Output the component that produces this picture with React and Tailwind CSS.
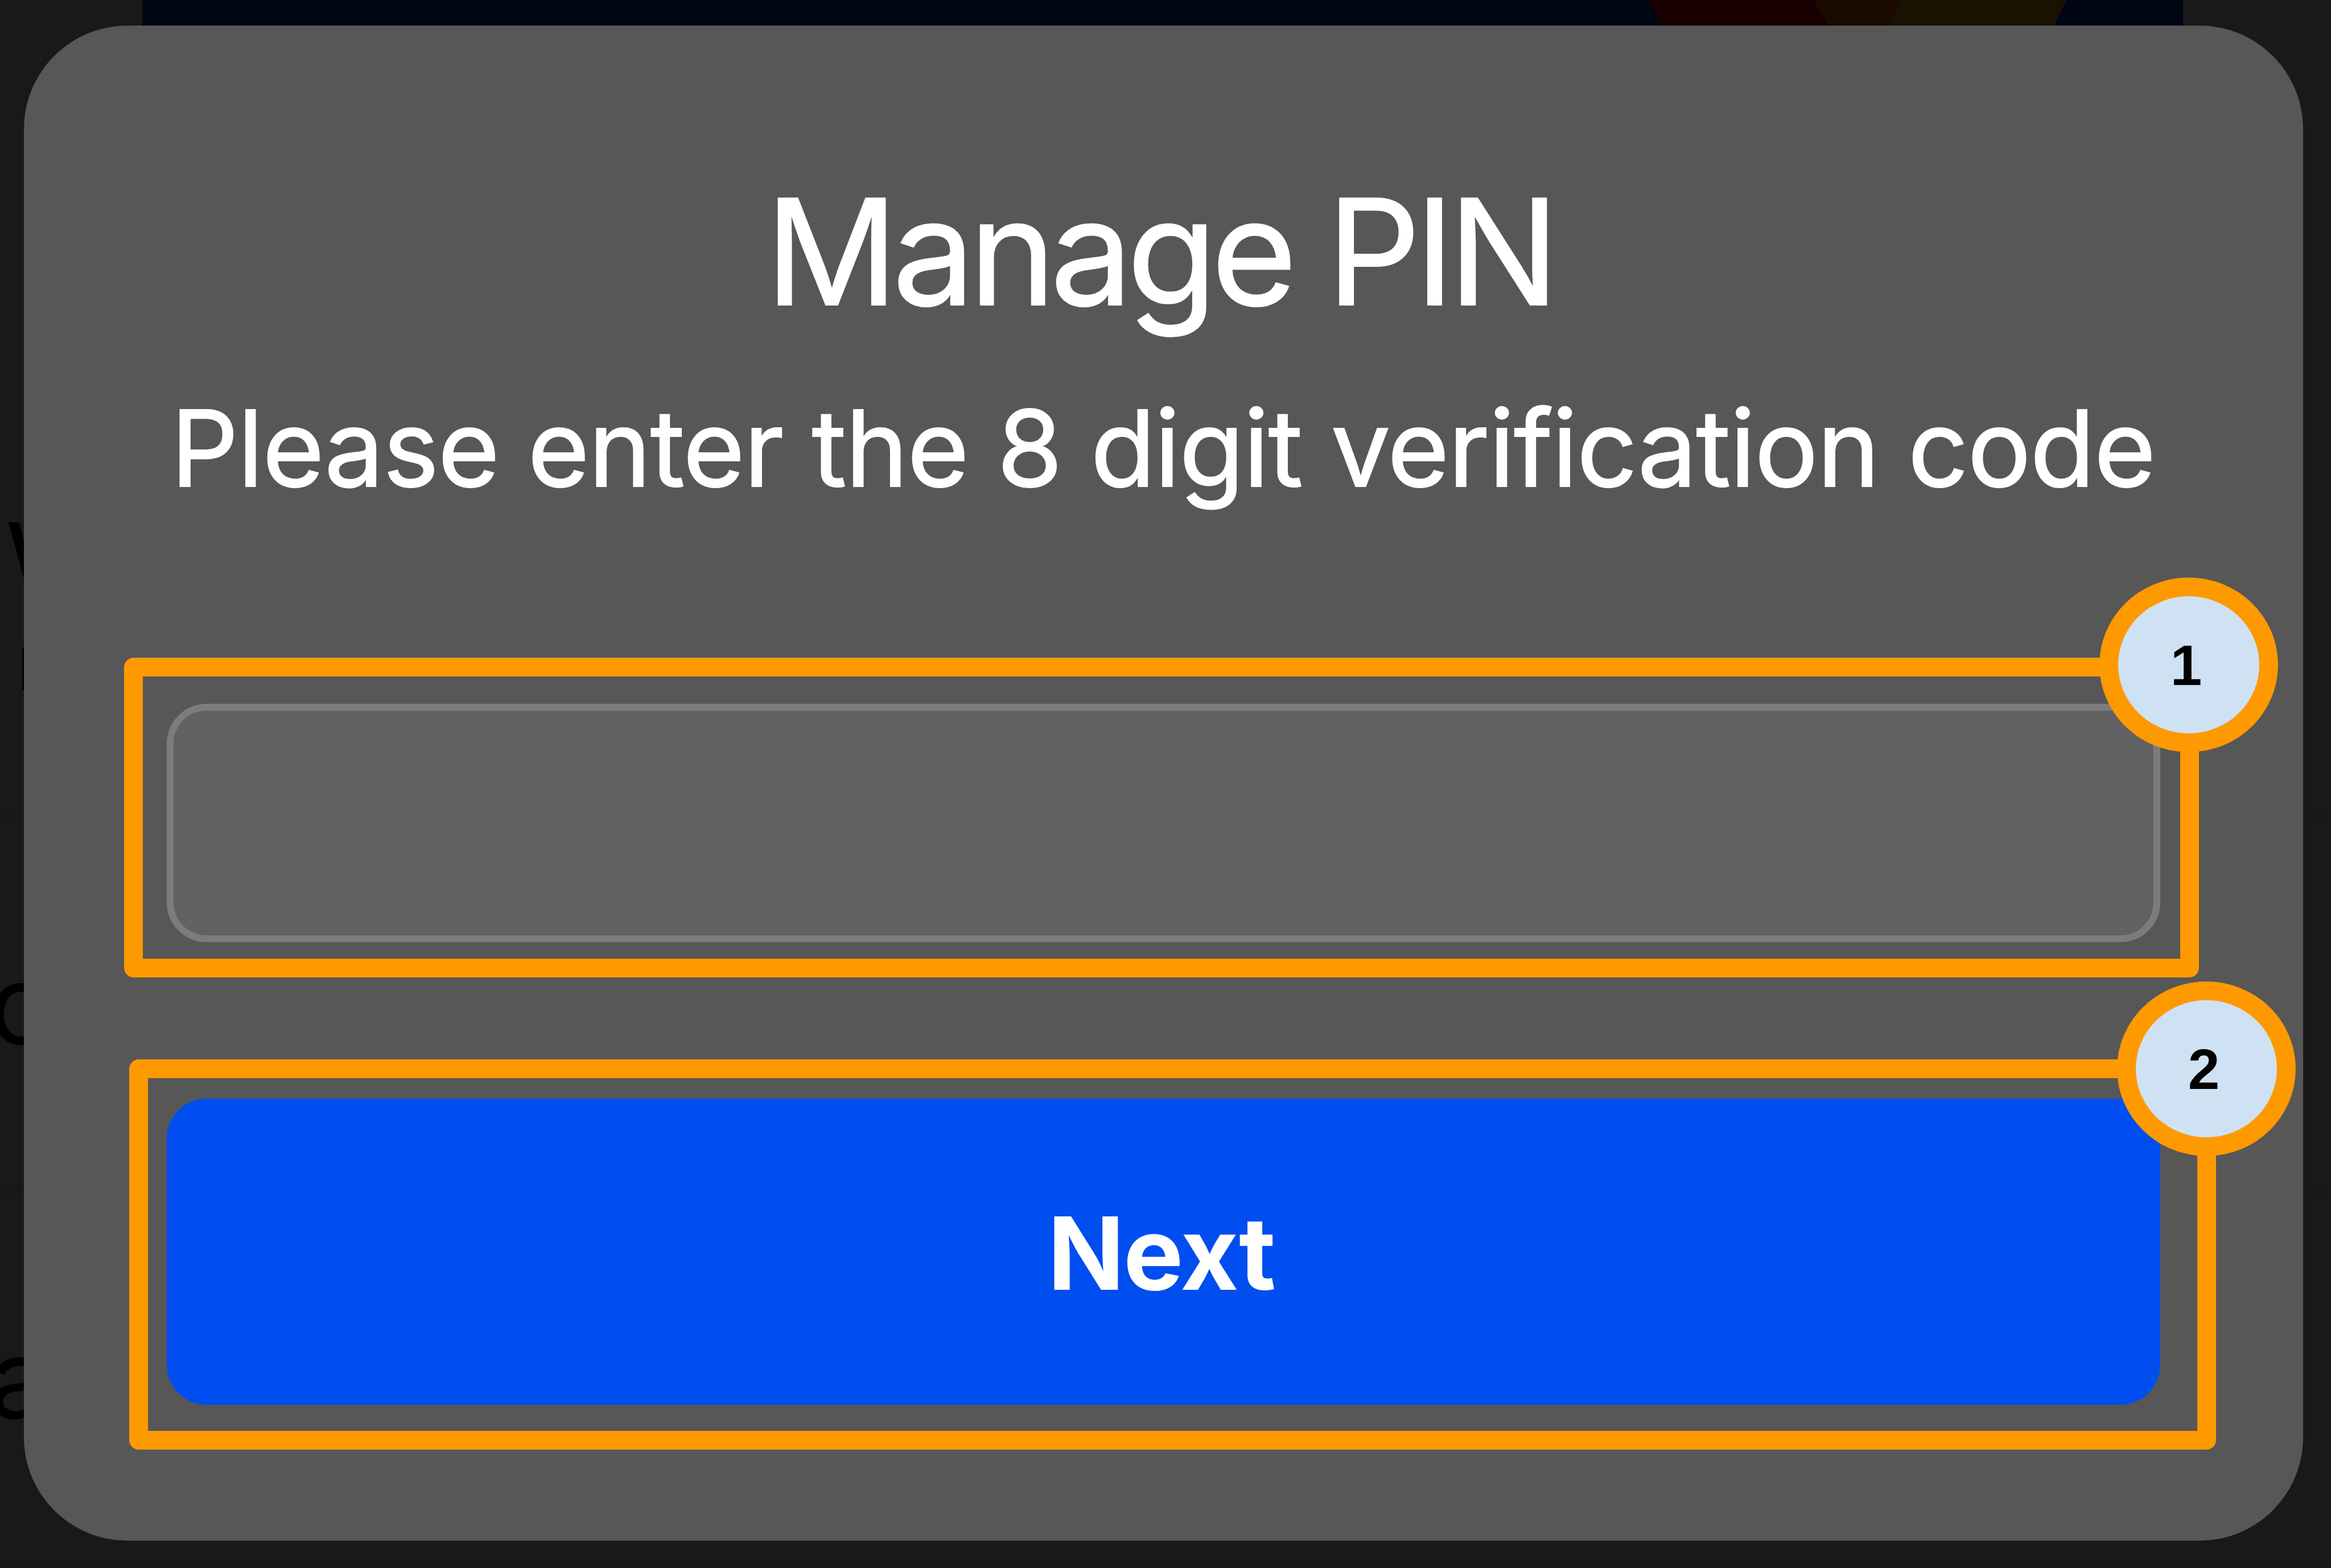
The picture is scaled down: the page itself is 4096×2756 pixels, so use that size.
import React from 'react';

// Orange numbered circle pinned to the corner of a callout frame
function CalloutBadge({ number, className }) {
    return (
        <div className={`absolute flex h-[307px] w-[314px] items-center justify-center rounded-[50%] border-[33px] border-[#ff9900] bg-[#cfe2f3] ${className}`}>
            <span className="mr-[9px] font-['Liberation_Sans',sans-serif] text-[100px] leading-none font-bold text-black">
                {number}
            </span>
        </div>
    );
}

// Dimmed page that sits behind the modal
function PageBackdrop() {
    return (
        <div className="flex h-full w-full flex-col bg-[#191919] font-['Inter',sans-serif] leading-none text-black">
            <div className="flex h-[1441px] flex-col border-b-[12px] border-[#161917]">
                <svg className="ml-[250px] h-[48px] w-[3586px]" viewBox="250 0 3586 48">
                    <rect x="250" y="0" width="3586" height="48" fill="#000514" />
                    <path d="M2897 0L2919 48H3214L3187 0Z" fill="#190000" />
                    <path d="M3187 0L3214 48H3317L3340 0Z" fill="#1a0a00" />
                    <path d="M3340 0L3317 48H3608L3631 0Z" fill="#1a1200" />
                </svg>
                <span className="mt-[848px] ml-[11px] text-[160px] font-medium">W</span>
                <span className="mt-[68px] ml-[31px] text-[103px]">l</span>
            </div>
            <div className="flex h-[656px] flex-col border-b-[12px] border-[#161917] pt-[228px]">
                <span className="-ml-[20px] text-[193px]">o</span>
            </div>
            <div className="flex h-[659px] flex-col border-b-[12px] border-[#161917] pt-[230px]">
                <span className="-ml-[20px] text-[193px]">a</span>
            </div>
        </div>
    );
}

function ManagePinModal() {
    return (
        <div className="flex h-[2663px] w-[4005px] flex-col rounded-[182px] bg-[#575757] pt-[241px] font-['Inter',sans-serif] text-white">
            <header className="flex flex-col gap-[77px] text-center whitespace-nowrap">
                <h1 className="pr-[14px] text-[258px] leading-[312px] tracking-[-10px] [-webkit-text-stroke:2px_white]">Manage PIN</h1>
                <p className="pr-[2px] text-[186px] leading-[225px] tracking-[-1.5px] [-webkit-text-stroke:2px_white]">
                    Please enter the 8 digit verification code
                </p>
            </header>

            <form className="flex flex-col gap-[144px] pt-[256px]">
                <div className="relative ml-[176px] flex h-[562px] w-[3646px] rounded-[17px] border-[33px] border-[#ff9900] pt-[48px] pl-[42px]">
                    <input
                        type="text"
                        className="h-[419px] w-[3503px] rounded-[70px] border-[12px] border-[#7c7c7c] bg-[#626262] outline-none"
                    />
                    <CalloutBadge number="1" className="-top-[174px] -right-[172px]" />
                </div>

                <div className="relative ml-[185px] flex h-[686px] w-[3667px] rounded-[17px] border-[33px] border-[#ff9900] pt-[36px] pl-[33px]">
                    <button
                        type="button"
                        className="h-[538px] w-[3503px] rounded-[70px] bg-[#004eef] pt-[6px] pr-[8px] text-[177px] leading-none font-bold tracking-[-2px]"
                    >
                        Next
                    </button>
                    <CalloutBadge number="2" className="-top-[170px] -right-[173px]" />
                </div>
            </form>
        </div>
    );
}

export default function App() {
    return (
        <div className="grid h-[2756px] w-[4096px] overflow-hidden">
            <div className="col-start-1 row-start-1 min-w-0">
                <PageBackdrop />
            </div>
            <div className="z-10 col-start-1 row-start-1 flex items-start pt-[45px] pl-[42px]">
                <ManagePinModal />
            </div>
        </div>
    );
}
